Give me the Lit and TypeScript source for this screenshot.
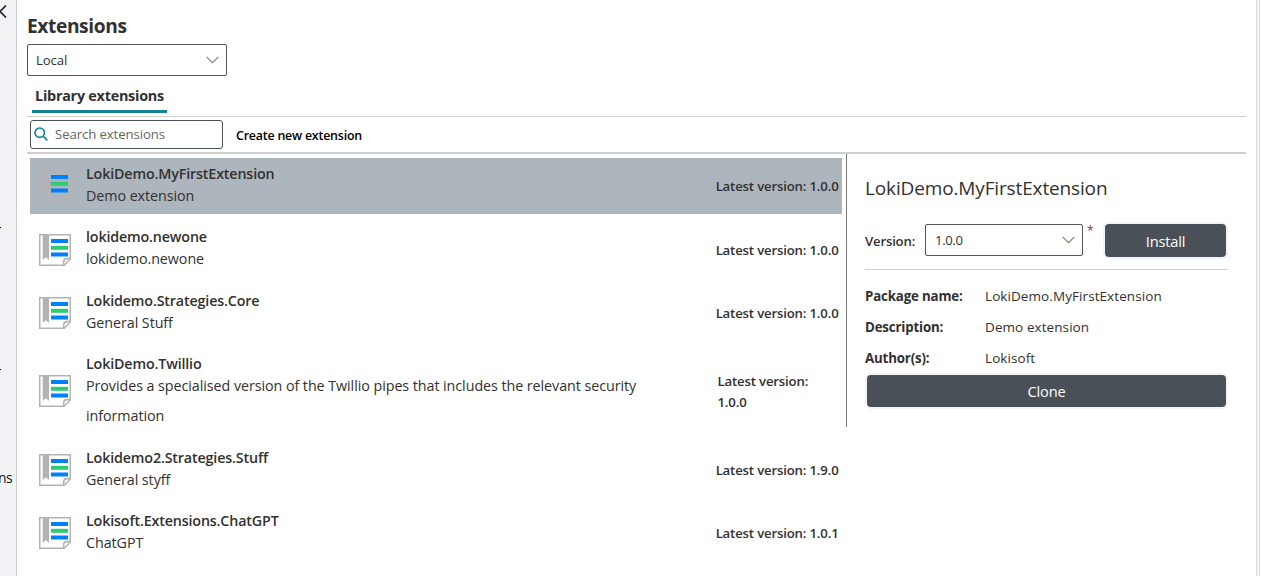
import { LitElement, html, css, svg } from "lit";
import { customElement, property } from "lit/decorators.js";

interface Extension {
  name: string;
  description: string;
  version: string;
  variant?: string;
}

const EXTENSIONS: Extension[] = [
  { name: "LokiDemo.MyFirstExtension", description: "Demo extension", version: "1.0.0", variant: "selected" },
  { name: "lokidemo.newone", description: "lokidemo.newone", version: "1.0.0" },
  { name: "Lokidemo.Strategies.Core", description: "General Stuff", version: "1.0.0" },
  {
    name: "LokiDemo.Twillio",
    description: "Provides a specialised version of the Twillio pipes that includes the relevant security information",
    version: "1.0.0",
    variant: "tall",
  },
  { name: "Lokidemo2.Strategies.Stuff", description: "General styff", version: "1.9.0" },
  { name: "Lokisoft.Extensions.ChatGPT", description: "ChatGPT", version: "1.0.1" },
];

const chevron = svg`<path d="M0.6 0.8 6.5 6.7 12.4 0.8" fill="none" stroke="currentColor" stroke-width="1.1"/>`;

@customElement("extension-row")
class ExtensionRow extends LitElement {
  @property({ attribute: false }) item!: Extension;

  static styles = css`
    :host { display: block; }
    .row { box-sizing: border-box; height: 56.4px; width: 812px; display: flex; align-items: center; padding: 0 3.5px 0 9px; }
    .selected { background: #adb5bd; }
    .tall { height: 86.4px; }
    .icon { flex: none; width: 32px; height: 32px; }
    .body { flex: none; width: 570px; margin-left: 15px; padding-top: 4.6px; }
    .name { font-size: 14.3px; font-weight: 600; line-height: 15px; letter-spacing: -0.16px; }
    .desc { font-size: 14.3px; line-height: 30px; letter-spacing: -0.06px; }
    .version { margin-left: auto; padding-top: 1px; font-size: 13.2px; font-weight: 600; line-height: 21px; letter-spacing: -0.17px; white-space: nowrap; }
    .tall .version { width: 121px; white-space: normal; }
    .tall .number { display: block; }
  `;

  render() {
    const { name, description, version, variant = "" } = this.item;
    return html`
      <div class="row ${variant}">
        <svg class="icon" viewBox="0 0 32 32">
          <path d="M.75.75h30.5v24.5l-6 6H.75z" fill="none" stroke="#b3b3b3" stroke-width="1.5" />
          <path d="M3.7 1H10v25l-3.2-2.8L3.7 26z" fill="#b3b3b3" />
          <path d="M24.7 31v-3.2q0-3.2 3.2-3.2H31" fill="none" stroke="#b3b3b3" stroke-width="1.6" />
          <path d="M12 5h17v4H12zM12 18.5h17v4H12z" fill="#0080ff" />
          <path d="M12 11.8h17v4H12z" fill="#2ecc71" />
        </svg>
        <div class="body">
          <div class="name">${name}</div>
          <div class="desc">${description}</div>
        </div>
        <div class="version">Latest version: <span class="number">${version}</span></div>
      </div>
    `;
  }
}

@customElement("app-root")
class AppRoot extends LitElement {
  static styles = css`
    :host { display: block; font-family: "Open Sans", "Noto Sans", sans-serif; color: #323130; }
    * { box-sizing: border-box; }
    .page { display: flex; width: 1261px; height: 576px; overflow: hidden; background: #fff; }
    .rail { flex: none; width: 17px; background: #f1f3f5; border-right: 1px solid #c8cdd8; overflow: hidden; color: #111; }
    .back { display: block; width: 7px; height: 13px; margin-top: 5px; }
    .dash { width: 1px; height: 1px; background: #111; }
    .dash-a { margin-top: 209px; }
    .dash-b { margin-top: 141px; }
    .nav { margin: 98px 0 0 -2px; font-size: 14px; line-height: 20px; letter-spacing: -0.5px; }
    .main { flex: none; width: 1239px; padding: 14px 0 0 10px; }
    .gutter { flex: none; width: 4px; background: #f4f4f4; border-left: 1px solid #dedede; border-right: 1px solid #dcdcdc; }
    h1 { margin: 0; font-size: 19.2px; line-height: 24px; font-weight: 700; letter-spacing: -0.4px; }
    .select { display: flex; align-items: center; justify-content: space-between; border: 1px solid #55585b; border-radius: 2px; background: #fff; height: 32px; }
    .source { width: 200px; margin-top: 6px; padding: 0 7px 0 8px; font-size: 13.2px; letter-spacing: -0.1px; }
    .chevron { width: 13px; height: 8px; color: #777; }
    .source .chevron { color: #8a7a76; }
    .picker .chevron { color: #8a7a60; }
    .tabs { width: 1219px; height: 41px; border-bottom: 1px solid #d0d0d0; padding: 7px 0 0 5px; }
    .tab { width: 135px; height: 30px; border-bottom: 3px solid #138496; padding-left: 3px; font-size: 14.4px; font-weight: 700; line-height: 26px; letter-spacing: -0.25px; white-space: nowrap; }
    .tools { width: 1219px; height: 37px; display: flex; padding: 3px 0 0 3px; border-bottom: 2px solid #d0d0d0; }
    .search { width: 193px; height: 29px; display: flex; align-items: center; border: 1px solid #495057; border-radius: 3px; padding: 0 0 2px 3px; color: #666; font-size: 13.2px; letter-spacing: -0.1px; }
    .search svg { width: 14px; height: 14px; margin-right: 7px; }
    .create { margin-left: 13px; font-size: 12.4px; line-height: 32px; font-weight: 600; color: #000; letter-spacing: -0.2px; }
    .content { display: flex; align-items: flex-start; }
    .list { width: 819px; padding: 4px 0 0 3px; display: grid; gap: 7px; }
    .details { width: 382px; height: 273px; border-left: 1px solid #777; padding: 20px 0 0 18px; }
    h2 { margin: 0; font-size: 19px; line-height: 28px; font-weight: 400; letter-spacing: -0.14px; }
    .install { width: 363px; height: 68px; margin-top: 0; padding: 22px 2px 0 0; display: flex; border-bottom: 1px solid #d0d0d0; }
    .label { width: 60px; font-size: 13.2px; font-weight: 600; line-height: 34px; letter-spacing: -0.2px; }
    .picker { width: 158px; padding: 0 7px 0 9px; font-size: 13.2px; letter-spacing: -0.4px; }
    .required { width: 22px; padding-left: 4px; color: #a4262c; font-size: 12px; line-height: 14px; }
    .button { display: grid; place-items: center; border-radius: 4px; background: #495057; color: #fff; font-size: 14.6px; letter-spacing: -0.2px; box-shadow: 0 0 0 2px #f1f4f7; }
    .install .button { width: 121px; height: 33px; }
    .facts { display: grid; grid-template-columns: 120px 1fr; grid-auto-rows: 31px; align-items: center; padding-top: 10px; font-size: 13.3px; letter-spacing: -0.17px; }
    .key { font-weight: 700; }
    .value { font-size: 13.5px; font-weight: 500; letter-spacing: 0.08px; }
    .clone { width: 359px; height: 32px; margin: 2px 0 0 2px; }
  `;

  render() {
    const facts = [
      ["Package name:", "LokiDemo.MyFirstExtension"],
      ["Description:", "Demo extension"],
      ["Author(s):", "Lokisoft"],
    ];
    return html`
      <div class="page">
        <div class="rail">
          <svg class="back" viewBox="0 0 7 13"><path d="M6 .5 0 6.5l6 6" fill="none" stroke="#222034" stroke-width="1.7" /></svg>
          <div class="dash dash-a"></div>
          <div class="dash dash-b"></div>
          <div class="nav">ns</div>
        </div>
        <main class="main">
          <h1>Extensions</h1>
          <div class="select source">Local<svg class="chevron" viewBox="0 0 13 8">${chevron}</svg></div>
          <div class="tabs"><div class="tab">Library extensions</div></div>
          <div class="tools">
            <div class="search">
              <svg viewBox="0 0 14 14"><circle cx="5.7" cy="5.7" r="4.7" fill="none" stroke="#138496" stroke-width="1.7" /><path d="m9 9 4.3 4.3" stroke="#138496" stroke-width="1.7" /></svg>
              Search extensions
            </div>
            <div class="create">Create new extension</div>
          </div>
          <div class="content">
            <div class="list">${EXTENSIONS.map((item) => html`<extension-row .item=${item}></extension-row>`)}</div>
            <section class="details">
              <h2>LokiDemo.MyFirstExtension</h2>
              <div class="install">
                <div class="label">Version:</div>
                <div class="select picker">1.0.0<svg class="chevron" viewBox="0 0 13 8">${chevron}</svg></div>
                <div class="required">*</div>
                <div class="button">Install</div>
              </div>
              <div class="facts">
                ${facts.map(([key, value]) => html`<div class="key">${key}</div><div class="value">${value}</div>`)}
              </div>
              <div class="button clone">Clone</div>
            </section>
          </div>
        </main>
        <div class="gutter"></div>
      </div>
    `;
  }
}
